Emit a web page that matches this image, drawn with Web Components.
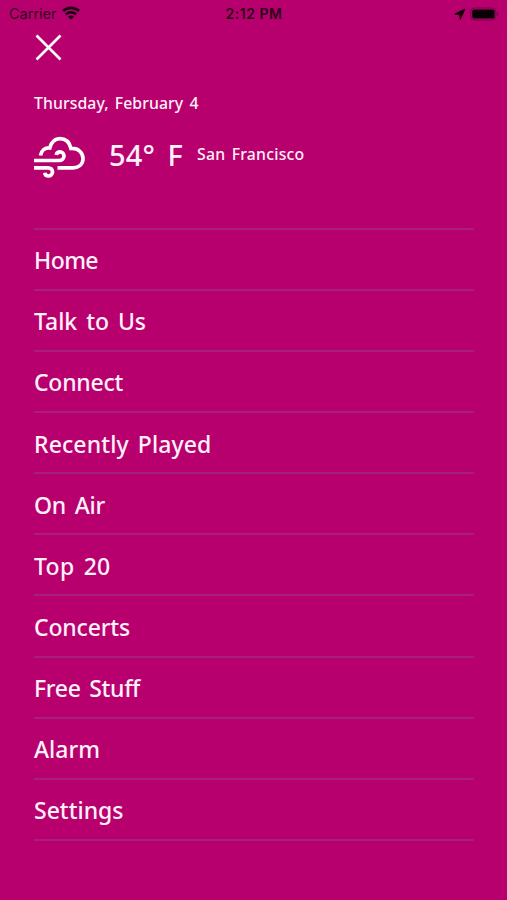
<!DOCTYPE html>
<html lang="en">
<head>
<meta charset="utf-8">
<meta name="viewport" content="width=device-width, initial-scale=1">
<title>Menu</title>
<style>
  body {
    margin: 0;
    background: #b7006d;
  }
</style>
</head>
<body>
<side-menu></side-menu>
<script>
// Text that spreads its letters to take up exactly the given width
class FitText extends HTMLElement {
  constructor() {
    super();
    this.root = this.attachShadow({ mode: 'open' });
    this.root.innerHTML = `
      <style>
        :host { display: block; white-space: nowrap; }
        span { display: inline-block; }
      </style>
      <span><slot></slot></span>
    `;
  }

  connectedCallback() {
    const span = this.root.querySelector('span');
    const target = parseFloat(this.getAttribute('width'));
    const count = this.textContent.length;
    const gap = (target - span.getBoundingClientRect().width) / count;
    span.style.letterSpacing = gap.toFixed(3) + 'px';
  }
}

class StatusBar extends HTMLElement {
  constructor() {
    super();
    this.root = this.attachShadow({ mode: 'open' });
    this.root.innerHTML = `
      <style>
        :host {
          display: grid;
          grid-template-columns: 1fr auto 1fr;
          align-items: center;
          box-sizing: border-box;
          height: 28px;
          padding: 0 8px 0 9px;
          font: 14.5px/20px Inter, sans-serif;
          color: #35051f;
        }
        .left, .right { display: flex; align-items: center; }
        .left { gap: 5px; }
        .right { justify-content: flex-end; gap: 4px; }
        .time { font-weight: 600; font-size: 14px; color: #2b0219; }
        svg { display: block; }
        .left svg { margin-top: -2px; }
        .right svg { margin-top: -1px; }
      </style>
      <div class="left">
        <fit-text width="47.5">Carrier</fit-text>
        <svg width="18" height="14" viewBox="0 0 18 14" fill="none" stroke="#19000f" stroke-width="2.8">
          <path d="M1 5.1C5.6.7 12.4.7 17 5.1M3.9 8.4c3-2.8 7.2-2.8 10.2 0"/>
          <path d="M9 13.6 6 10.700c1.700-1.500 4.300-1.500 6 0z" fill="#19000f" stroke="none"/>
        </svg>
      </div>
      <fit-text class="time" width="57">2:12 PM</fit-text>
      <div class="right">
        <svg width="12" height="12" viewBox="0 0 12 12" fill="#160009" stroke="#160009" stroke-linejoin="round"><path d="M11 1 .8 6l4.800.600.600 4.800z"/></svg>
        <svg width="29" height="14" viewBox="0 0 29 14">
          <rect x=".8" y="1" width="25" height="12" rx="3.500" fill="none" stroke="#76054a"/>
          <rect x="2.200" y="2.500" width="22.300" height="9" rx="1.800" fill="#080004"/>
          <path d="M27 5c2 .5 2 3.500 0 4z" fill="#76054a"/>
        </svg>
      </div>
    `;
  }
}

class WeatherInfo extends HTMLElement {
  constructor() {
    super();
    this.root = this.attachShadow({ mode: 'open' });
    this.root.innerHTML = `
      <style>
        :host { display: block; }
        .date, .city { font-size: 15.8px; line-height: 20px; font-weight: 500; word-spacing: 2px; }
        .row { display: flex; align-items: center; height: 46px; margin-top: 21px; }
        .icon { display: block; flex: none; margin-right: 24px; }
        .temp { font-size: 29px; line-height: 40px; font-weight: 500; word-spacing: 5px; margin-top: -4px; }
        .city { margin: -6px 0 0 14px; }
      </style>
      <fit-text class="date" width="164.5">Thursday, February 4</fit-text>
      <div class="row">
        <svg class="icon" width="51" height="42" viewBox="0 0 51 42" fill="none" stroke="#fff" stroke-width="3.700">
          <path d="M6.500 19.500C7.500 14 11.500 11.500 15.800 12C17.500 5.500 21.500 2.700 26 2.700C31.500 2.700 35.500 6.500 37 12.500C44.500 12 49 17 49 22.500C49 28.500 44.500 31.800 39 31.800H23.500"/>
          <path d="M0 24.500H25C28.200 24.500 30 22.300 30 20C30 17.500 28.200 15.900 26 15.900C24 15.900 22.600 17.200 22.300 19"/>
          <path d="M0 31.800H13.500C16.500 31.800 18.500 33.300 18.500 36C18.500 38.500 16.500 40 14.500 40C12.300 40 11 38.700 10.800 36.800"/>
        </svg>
        <fit-text class="temp" width="74">54° F</fit-text>
        <fit-text class="city" width="107.500">San Francisco</fit-text>
      </div>
    `;
  }
}

class MenuItem extends HTMLElement {
  constructor() {
    super();
    this.root = this.attachShadow({ mode: 'open' });
    this.root.innerHTML = `
      <style>
        :host {
          display: flex;
          align-items: center;
          box-sizing: border-box;
          height: 61.080px;
          padding-top: 1.500px;
          border-bottom: 2px solid #a72077;
          font-size: 23px;
          line-height: 32px;
          font-weight: 500;
          word-spacing: 3px;
        }
      </style>
      <slot></slot>
    `;
  }
}

const items = [
  ['Home', 64],
  ['Talk to Us', 112],
  ['Connect', 89],
  ['Recently Played', 177.5],
  ['On Air', 71],
  ['Top 20', 76.5],
  ['Concerts', 96],
  ['Free Stuff', 106],
  ['Alarm', 66],
  ['Settings', 89.5]
];

class SideMenu extends HTMLElement {
  constructor() {
    super();
    this.root = this.attachShadow({ mode: 'open' });
    this.root.innerHTML = `
      <style>
        :host {
          display: block;
          box-sizing: border-box;
          height: 900px;
          overflow: hidden;
          background: #b7006d;
          color: #fff0fa;
          font-family: "Noto Sans", sans-serif;
        }
        .content { padding: 6px 33px 0 34px; }
        button {
          display: block;
          margin: 0 0 32px 1px;
          padding: 0;
          border: 0;
          background: none;
          color: #fff;
        }
        button svg { display: block; }
        nav { margin-top: 48px; border-top: 2px solid #a72077; }
      </style>
      <status-bar></status-bar>
      <div class="content">
        <button aria-label="Close">
          <svg width="27" height="27" viewBox="0 0 27 27" fill="none" stroke="currentColor" stroke-width="2.700">
            <path d="M1.500 1.500l24 24M25.500 1.500l-24 24"/>
          </svg>
        </button>
        <weather-info></weather-info>
        <nav>
          ${items.map(([label, width]) => `<menu-item><fit-text width="${width}">${label}</fit-text></menu-item>`).join('')}
        </nav>
      </div>
    `;
  }
}

customElements.define('status-bar', StatusBar);
customElements.define('weather-info', WeatherInfo);
customElements.define('menu-item', MenuItem);
customElements.define('side-menu', SideMenu);
// Defined last so that the text is measured with its inherited font in place
customElements.define('fit-text', FitText);
</script>
</body>
</html>
